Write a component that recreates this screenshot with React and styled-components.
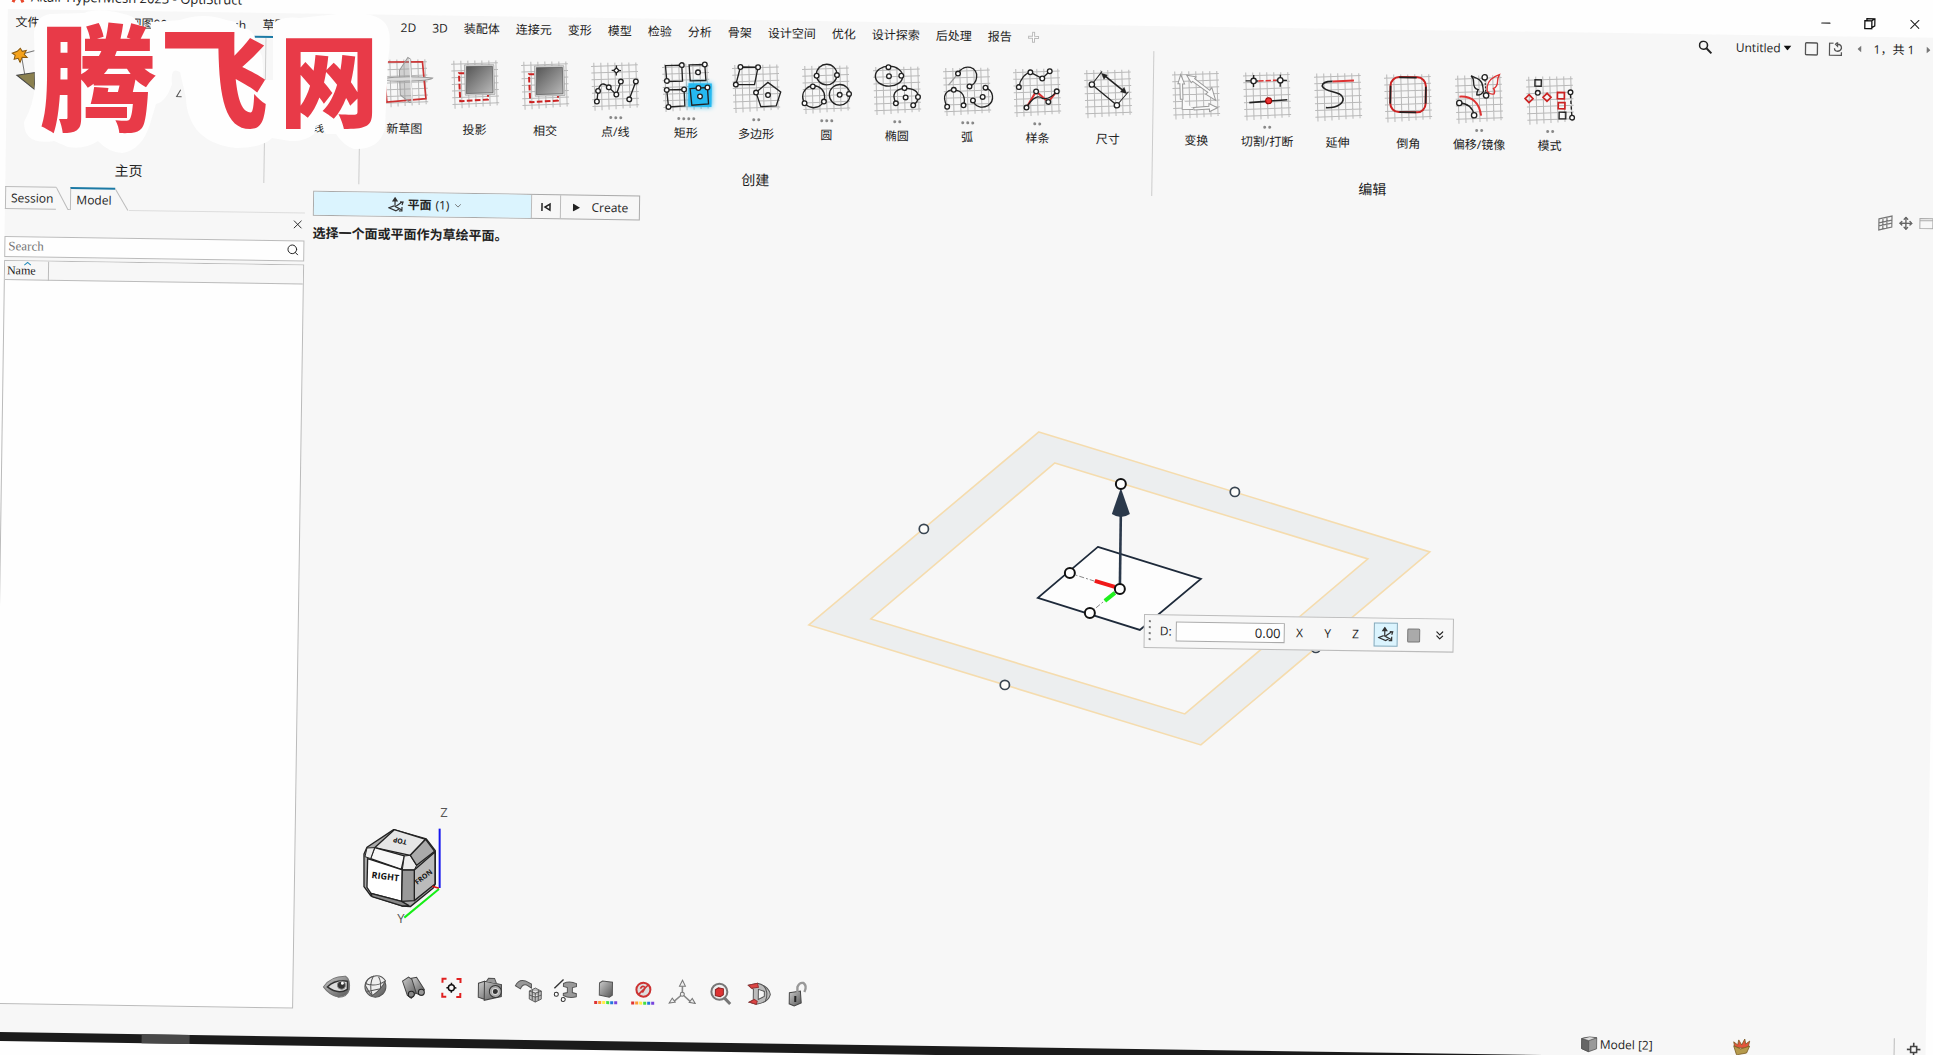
import React, { useState } from 'react'
import styled, { createGlobalStyle, css } from 'styled-components'
import { Search, X, Minus, Move, ChevronDown, ChevronsDown } from 'lucide-react'

const sans = `"Open Sans", "Noto Sans CJK SC", sans-serif`

/* ---------- ribbon drawings, all on a 150 unit sheet ---------- */

const Sheet = () => {
  const steps = [0, 1, 2, 3, 4, 5, 6]
  return (
    <g stroke='#b9b9b9' strokeWidth='3'>
      {steps.map((i) => (
        <path
          key={i}
          d={`M${8 + i * 21} ${3 - i / 2}L${14 + i * 21} ${147 - i * 2}M${i} ${14 + i * 20}L${140 + i} ${7 + i * 20}`}
        />
      ))}
    </g>
  )
}

const Dots = ({ at, r = 6 }) =>
  at.map(([x, y]) => (
    <circle key={`${x}-${y}`} cx={x} cy={y} r={r} fill='#fff' stroke='#222' strokeWidth='4' />
  ))

const Plate = () => (
  <>
    <path d='M40 40H24L29 124L112 118V104' stroke='#c22' strokeWidth='6' strokeDasharray='17 7' />
    <path d='M40 15L128 13L133 102L44 106Z' fill='#ddd' stroke='#999' strokeWidth='2' />
    <path d='M46 20L124 18L127 97L47 101Z' fill='url(#plate)' stroke='#555' strokeWidth='2' />
  </>
)

const drawings = {
  sketch: (
    <>
      <path d='M10 10L127 8L139 118L22 130Z' stroke='#c33' strokeWidth='5' />
      <path d='M58 35L83-5L90 0L98 128L90 130L62 108Z' fill='#9996' stroke='#999' strokeWidth='3' />
      <path d='M0 60Q80 48 158 56Q150 64 80 66Q20 70 0 60Z' fill='#ddd' stroke='#999' strokeWidth='3' />
      <path d='M88 0L98 130' stroke='#eee' strokeWidth='4' />
    </>
  ),
  plate: <Plate />,
  points: (
    <>
      <path d='M76 10V40M62 25H90' strokeWidth='4' />
      <path d='M19 119L22 87Q30 52 54 76L77 97L90 58M116 111L135 57' />
      <path d='M76 17L84 25L76 33L68 25Z' fill='#fff' />
      <Dots at={[[19, 119], [22, 87], [54, 76], [77, 97], [90, 58], [116, 111], [135, 57]]} r={7} />
    </>
  ),
  rect: (
    <>
      <rect x='80' y='60' width='70' height='70' fill='#25b9f0' stroke='none' filter='url(#glow)' />
      <rect x='80' y='60' width='70' height='70' fill='#25b9f0' stroke='none' />
      <path d='M10 8L59 6L62 54L15 56ZM81 5L128 3L132 51L85 53ZM15 81L67 79L70 128L21 132ZM85 76L137 72L141 121L91 126Z' />
      <Dots at={[[59, 6], [15, 54], [128, 3], [108, 27], [15, 81], [67, 79], [21, 132], [110, 74], [137, 72], [115, 99]]} r={7} />
    </>
  ),
  polygon: (
    <>
      <path d='M25 9H78L68 61L12 62Z' />
      <path d='M108 54L147 82L134 124L88 127L73 85Z' />
      <Dots at={[[25, 9], [78, 9], [12, 62], [73, 85], [109, 92]]} r={7} />
    </>
  ),
  circle: (
    <>
      <circle cx='74' cy='28' r='31' />
      <circle cx='36' cy='95' r='33' />
      <circle cx='114' cy='88' r='31' />
      <Dots at={[[44, 32], [105, 29], [33, 64], [9, 115], [67, 109], [142, 85], [114, 88]]} r={7} />
    </>
  ),
  ellipse: (
    <>
      <ellipse cx='48' cy='30' rx='41' ry='30' />
      <path d='M70 111Q50 72 95 65Q138 66 136 91Q137 106 122 116' />
      <Dots at={[[46, 3], [85, 28], [48, 30], [70, 111], [99, 93], [95, 65], [136, 91], [122, 116]]} r={7} />
    </>
  ),
  arc: (
    <>
      <path d='M17 54L45 19' stroke='#999' />
      <path d='M45 19C64-16 106 0 101 30Q99 50 80 57M14 119C-6 84 14 67 33 68C60 69 70 90 63 114M128 60C152 68 158 98 136 114C118 124 98 118 91 99' />
      <Dots at={[[45, 19], [80, 57], [14, 119], [33, 68], [63, 114], [128, 60], [91, 99], [120, 88]]} r={7} />
    </>
  ),
  spline: (
    <>
      <path d='M18 57C22 30 38 14 52 12L88 30L110 8' />
      <path d='M42 118L70 69L107 100L132 68' stroke='#d33' strokeWidth='6' />
      <path d='M42 118C60 86 76 80 90 90Q112 94 132 68' />
      <Dots at={[[18, 57], [52, 12], [88, 30], [110, 8], [42, 118], [70, 69], [107, 100], [132, 68]]} r={7} />
    </>
  ),
  measure: (
    <>
      <path d='M24 46L54 6M100 107L134 66' strokeWidth='3' />
      <path d='M24 46L100 107' />
      <path d='M58 16L122 66' strokeWidth='5' />
      <path d='M52 12L70 17L60 30ZM129 72L110 66L121 53Z' fill='#222' strokeWidth='1' />
      <Dots at={[[24, 46], [100, 107]]} r={8} />
    </>
  ),
  transform: (
    <g fill='#fafafa' stroke='#999' strokeWidth='3'>
      <path d='M26 12L38 40H32L34 86H26L24 40H18Z' />
      <path d='M44 14L72 18L68 24L114 58L120 50L132 88L102 70L108 64L62 32L58 36Z' />
      <path d='M66 110L112 106V98L138 110L114 122V114L68 118Z' />
      <path d='M32 86V116H66' />
    </g>
  ),
  split: (
    <>
      <path d='M8 28H24M40 28H46M100 25H132M32 10V46M112 8V44' />
      <path d='M46 28L100 25' stroke='#d33' strokeWidth='5' strokeDasharray='16 6' />
      <path d='M20 93L134 83' strokeWidth='5' />
      <circle cx='32' cy='28' r='8' fill='#fff' />
      <circle cx='112' cy='25' r='8' fill='#fff' />
      <circle cx='78' cy='87' r='9' fill='#e33' stroke='#900' strokeWidth='3' />
    </>
  ),
  extend: (
    <>
      <path d='M37 105C76 106 90 88 88 76C84 52 34 62 25 40C26 28 38 26 56 26' strokeWidth='5' />
      <path d='M56 26L120 22' stroke='#d33' strokeWidth='6' />
    </>
  ),
  fillet: (
    <>
      <rect x='20' y='10' width='106' height='105' rx='26' stroke='#c22' strokeWidth='6' />
      <path d='M46 11H98M48 115H98M20 36V90M126 38V88' strokeWidth='5' />
    </>
  ),
  mirror: (
    <>
      <path d='M48 3C60 8 82 12 84 36L86 50Q78 62 66 60Q66 50 70 44Q56 42 56 22Q56 10 48 3Z' />
      <path d='M133-2C116 4 100 14 97 34L97 48Q106 60 118 56Q122 48 116 40Q128 36 128 16Q128 8 133-2Z' stroke='#d33' />
      <path d='M90 14L93 56' strokeDasharray='6 4' strokeWidth='3' />
      <path d='M14 66Q70 62 80 122' stroke='#d33' strokeWidth='6' />
      <path d='M14 85Q52 86 59 121' />
      <Dots at={[[89, 7], [94, 61], [14, 85], [59, 121]]} r={8} />
    </>
  ),
  pattern: (
    <>
      <rect x='27' y='12' width='19' height='19' />
      <path d='M10 57L22 69L10 81L-2 69ZM64 52L76 64L64 76L52 64ZM95 49H116V68H95ZM98 79H118V98H98Z' stroke='#c22' strokeWidth='5' />
      <path d='M101 108H121V128H101Z' />
      <path d='M134 56L139 118' strokeDasharray='10 7' />
      <Dots at={[[36, 51], [134, 48], [140, 124]]} r={7} />
    </>
  ),
}

const ToolDrawing = ({ kind }) => (
  <svg width='50' height='50' viewBox='0 0 150 150' overflow='visible' fill='none' stroke='#222' strokeWidth='4'>
    <Sheet />
    {drawings[kind]}
  </svg>
)

const PlaneGlyph = () => (
  <svg width='16' height='16' viewBox='0 0 16 16' fill='none' stroke='#333' strokeWidth='1.2'>
    <path d='M7 2V10M5 4L7 1L9 4Z' fill='#333' />
    <path d='M6 9L1 11L8 14L11 12M7 10L14 5M12 5L15 5L14 8M8 10L14 13M14 10V14H11' />
  </svg>
)

/* ---------- view toolbar drawings, 30 unit box ---------- */

const viewIcons = [
  ['显示', (
    <>
      <path d='M2 16Q9 5 24 5Q29 8 28 18Q26 26 17 26Q8 24 2 16Z' fill='url(#steel)' stroke='#777' />
      <path d='M6 16Q14 8 26 10V18Q17 24 6 16Z' fill='#ddd' stroke='#333' strokeWidth='1.5' />
      <circle cx='20' cy='14' r='4' fill='#333' stroke='#888' />
      <circle cx='21' cy='12' r='1.5' fill='#fff' />
    </>
  )],
  ['球', (
    <>
      <circle cx='15' cy='15' r='10.5' fill='url(#steel)' stroke='#555' />
      <path d='M25 9A11 11 0 0 0 5 14Q8 20 12 24Q21 18 25 9Z' fill='#eee' stroke='#555' />
      <path d='M13 4Q8 13 12 24M5 12Q15 16 25 9M18 5Q21 10 20 17M7 20L20 17' stroke='#555' fill='none' />
    </>
  )],
  ['查找', (
    <>
      <path d='M4 9L10 5L15 8L18 20L13 26L9 23Z' fill='url(#steel)' stroke='#444' />
      <path d='M13 6L18 5L26 17L23 23L18 21Z' fill='url(#steel)' stroke='#444' />
      <circle cx='13' cy='22' r='3' fill='#888' stroke='#222' />
      <circle cx='23' cy='20' r='3' fill='#999' stroke='#222' />
    </>
  )],
  ['适合窗口', (
    <>
      <path d='M6 10V6H10M20 6H24V10M24 20V24H20M10 24H6V20' fill='none' stroke='#e02020' strokeWidth='2' />
      <circle cx='15' cy='15' r='3' fill='none' stroke='#111' strokeWidth='1.5' />
      <path d='M15 10V12M15 18V20M10 15H12M18 15H20' stroke='#111' strokeWidth='1.5' />
    </>
  )],
  ['截图', (
    <>
      <path d='M3 10L9 8V26L3 24ZM9 8L26 11V23L9 27Z' fill='url(#steel)' stroke='#444' />
      <path d='M11 8L13 5H19L21 10' fill='#999' stroke='#555' />
      <circle cx='20' cy='18' r='6' fill='#aaa' stroke='#333' />
      <circle cx='20' cy='18' r='3' fill='#333' stroke='#ddd' />
    </>
  )],
  ['旋转', (
    <>
      <path d='M2 12Q5 5 12 7L18 10L18 14L13 11Q9 10 7 15Z' fill='#999' stroke='#555' />
      <path d='M16 17L22 14L28 17V25L22 28L16 25ZM16 17L22 19L28 17M22 19V28M19 16V26M25 16V26M16 21L22 23L28 21' fill='#bbb' stroke='#444' strokeWidth='.8' />
    </>
  )],
  ['线轴', (
    <>
      <path d='M3 14L12 5' stroke='#333' strokeWidth='1.4' />
      <circle cx='5' cy='20' r='2' fill='#fff' stroke='#333' />
      <circle cx='12' cy='25' r='2' fill='#fff' stroke='#333' />
      <path d='M12 9Q18 6 25 9V12L21 13V18L25 19V22Q18 24 12 21V19L16 18V13L12 12Z' fill='#999' stroke='#555' />
    </>
  )],
  ['着色', (
    <>
      <path d='M9 8L12 6L22 7V20L19 22L9 20Z' fill='url(#steel)' stroke='#555' />
      <rect x='4' y='26' width='3' height='3' fill='#d33' /><rect x='8' y='26' width='3' height='3' fill='#f93' />
      <rect x='12' y='26' width='3' height='3' fill='#fe4' /><rect x='16' y='26' width='3' height='3' fill='#4d4' />
      <rect x='20' y='26' width='3' height='3' fill='#27d' /><rect x='24' y='26' width='3' height='3' fill='#74d' />
    </>
  )],
  ['取消着色', (
    <>
      <circle cx='15' cy='14' r='7' fill='#ddd' stroke='#c33' strokeWidth='2' />
      <path d='M10 19L20 9M12 13Q14 9 17 12L14 17' stroke='#c33' strokeWidth='1.6' fill='none' />
      <rect x='3' y='26' width='3' height='3' fill='#d33' /><rect x='7' y='26' width='3' height='3' fill='#f93' />
      <rect x='11' y='26' width='3' height='3' fill='#fe4' /><rect x='15' y='26' width='3' height='3' fill='#4d4' />
      <rect x='19' y='26' width='3' height='3' fill='#27d' /><rect x='23' y='26' width='3' height='3' fill='#74d' />
    </>
  )],
  ['坐标', (
    <>
      <path d='M15 10V18L6 26M15 18L24 26' fill='none' stroke='#888' strokeWidth='1.6' />
      <path d='M15 4L18 10H12ZM2 27L5 22L8 26ZM28 27L22 26L25 22Z' fill='#eee' stroke='#777' />
      <circle cx='15' cy='18' r='2' fill='#eee' stroke='#777' />
    </>
  )],
  ['放大', (
    <>
      <circle cx='14' cy='15' r='8' fill='#eee' stroke='#777' strokeWidth='2' />
      <path d='M10 13L13 11L18 12V18L15 20L10 19Z' fill='#d33' stroke='#822' />
      <path d='M19 21L25 27' stroke='#777' strokeWidth='3' />
    </>
  )],
  ['剖切', (
    <>
      <path d='M5 8L14 6Q26 9 27 17Q25 25 13 27L6 25L10 23V12Z' fill='#bbb' stroke='#555' />
      <path d='M5 8L14 6L15 10L8 11ZM6 25L11 22L14 24L13 27Z' fill='#d44' stroke='#933' />
      <path d='M15 12L21 14V19L15 22Z' fill='#f5f5f5' stroke='#555' />
      <path d='M20 8Q26 15 22 24' stroke='#555' fill='none' />
    </>
  )],
  ['解锁', (
    <>
      <path d='M7 15L18 13L19 25L12 28L7 26Z' fill='url(#steel)' stroke='#444' />
      <path d='M15 14V9Q17 4 21 5Q25 8 22 14' fill='none' stroke='#999' strokeWidth='2.4' />
      <path d='M12 18H14V24H12Z' fill='#222' />
    </>
  )],
]

const tabs = ['2D', '3D', '装配体', '连接元', '变形', '模型', '检验', '分析', '骨架', '设计空间', '优化', '设计探索', '后处理', '报告']

const createTools = [
  { name: '新草图', kind: 'sketch', more: 0 },
  { name: '投影', kind: 'plate', more: 0 },
  { name: '相交', kind: 'plate', more: 0 },
  { name: '点/线', kind: 'points', more: 3 },
  { name: '矩形', kind: 'rect', more: 4 },
  { name: '多边形', kind: 'polygon', more: 2 },
  { name: '圆', kind: 'circle', more: 3 },
  { name: '椭圆', kind: 'ellipse', more: 2 },
  { name: '弧', kind: 'arc', more: 3 },
  { name: '样条', kind: 'spline', more: 2 },
  { name: '尺寸', kind: 'measure', more: 0 },
]

const editTools = [
  { name: '变换', kind: 'transform', more: 0 },
  { name: '切割/打断', kind: 'split', more: 2 },
  { name: '延伸', kind: 'extend', more: 0 },
  { name: '倒角', kind: 'fillet', more: 0 },
  { name: '偏移/镜像', kind: 'mirror', more: 2 },
  { name: '模式', kind: 'pattern', more: 2 },
]

const Tool = ({ name, kind, more }) => (
  <ToolButton>
    <ToolDrawing kind={kind} />
    <More>
      {Array.from({ length: more }, (_, i) => (
        <i key={i} />
      ))}
    </More>
    {name}
  </ToolButton>
)

const TitleBar = () => (
  <Title>
    <svg width='14' height='14' viewBox='0 0 14 14' fill='none' stroke='#e8472b' strokeWidth='3'>
      <path d='M2 13L7 2L12 13' />
    </svg>
    <h1>Altair HyperMesh 2023 - OptiStruct</h1>
    <WindowButtons>
      <button aria-label='最小化'><Minus size={14} strokeWidth={2} /></button>
      <button aria-label='还原'>
        <svg width='12' height='12' viewBox='0 0 12 12' fill='none' stroke='#111' strokeWidth='1.3'>
          <path d='M1 3H8V11H1ZM3 3V1H11V8L8 10M8 3L11 1' />
        </svg>
      </button>
      <button aria-label='关闭'><X size={16} strokeWidth={1.6} /></button>
    </WindowButtons>
  </Title>
)

const MenuBar = () => (
  <Menu>
    <LeadTabs>
      <Tab>文件</Tab>
      <Tab>视图00</Tab>
      <Tab>Mesh</Tab>
      <Tab $active>草图</Tab>
    </LeadTabs>
    {tabs.map((name) => (
      <Tab key={name}>{name}</Tab>
    ))}
    <Tab aria-label='添加'>
      <svg width='12' height='12' viewBox='0 0 12 12' fill='#fff' stroke='#bbb'>
        <path d='M5 1H7V5H11V7H7V11H5V7H1V5H5Z' />
      </svg>
    </Tab>
    <Session>
      <button aria-label='搜索'>
        <svg width='14' height='14' viewBox='0 0 14 14' fill='none' stroke='#222' strokeWidth='1.6'>
          <circle cx='5' cy='5' r='4' /><path d='M8 8L13 13' strokeWidth='2' />
        </svg>
      </button>
      <button className='doc'>
        Untitled
        <svg width='8' height='5' viewBox='0 0 8 5'><path d='M0 0H8L4 5Z' fill='#111' /></svg>
      </button>
      <button aria-label='新页面'>
        <svg width='14' height='14' viewBox='0 0 14 14' fill='none' stroke='#555' strokeWidth='1.4'>
          <rect x='1' y='1' width='12' height='12' rx='1' />
        </svg>
      </button>
      <button aria-label='刷新页面'>
        <svg width='14' height='14' viewBox='0 0 14 14' fill='none' stroke='#555' strokeWidth='1.3'>
          <path d='M5 1H1V13H13V10M9 2Q13 2 13 6Q12 9 9 9Q6 9 6 6M9 0V4L7 2Z' />
        </svg>
      </button>
      <div className='pages'>
        <button aria-label='上一页'><svg width='4' height='7' viewBox='0 0 4 7'><path d='M4 0V7L0 3.5Z' fill='#777' /></svg></button>
        <span>1，共 1</span>
        <button aria-label='下一页'><svg width='4' height='7' viewBox='0 0 4 7'><path d='M0 0V7L4 3.5Z' fill='#777' /></svg></button>
      </div>
    </Session>
  </Menu>
)

const Ribbon = () => (
  <RibbonRow>
    <HomeGroup $width={259}>
      <HomeArt width='180' height='56' viewBox='0 0 180 56'>
        <path d='M12 13L26 9M12 13L16 34' stroke='#777' />
        <path d='M11 7L13 10L17 9L15 13L18 16L13 16L11 21L9 17L5 18L6 14L3 12L8 10Z' fill='#f5a21b' stroke='#8a5a10' />
        <path d='M8 34L26 31V48Z' fill='#8b8150' stroke='#444' />
        <path d='M172 46L168 53H173' fill='none' stroke='#555' />
      </HomeArt>
      <h2>主页</h2>
    </HomeGroup>
    <Group $width={95}>
      <Tools $width={95} $count={1}>
        <ToolButton><Blank />直线</ToolButton>
      </Tools>
    </Group>
    <Group $width={793}>
      <Tools $width={774} $count={11}>
        {createTools.map((tool) => (
          <Tool key={tool.name} {...tool} />
        ))}
      </Tools>
      <h2>创建</h2>
    </Group>
    <Group $width={440} $last>
      <Tools $width={424} $count={6}>
        {editTools.map((tool) => (
          <Tool key={tool.name} {...tool} />
        ))}
      </Tools>
      <h2>编辑</h2>
    </Group>
  </RibbonRow>
)

const Browser = () => (
  <Side>
    <SideTabs>
      <button>Session</button>
      <svg width='14' height='23' viewBox='0 0 14 23' fill='none' stroke='#bbb'><path d='M0 .5L12 22.5H14' /></svg>
      <button className='active'>Model</button>
      <svg width='14' height='23' viewBox='0 0 14 23' fill='none' stroke='#bbb'><path d='M0 1L13 22.5' /></svg>
      <span />
    </SideTabs>
    <CloseRow>
      <button aria-label='关闭面板'><X size={14} strokeWidth={1.6} /></button>
    </CloseRow>
    <SearchBox>
      <input aria-label='Search' placeholder='Search' />
      <Search size={13} strokeWidth={1.8} />
    </SearchBox>
    <Tree>
      <table>
        <thead>
          <tr>
            <th scope='col'>
              Name
              <svg width='7' height='4' viewBox='0 0 7 4' fill='none' stroke='#1b87b8'><path d='M0 4L3.5 1L7 4' /></svg>
            </th>
            <td />
          </tr>
        </thead>
      </table>
    </Tree>
  </Side>
)

const Scene = () => (
  <SceneSvg width='650' height='350' overflow='visible'>
    <g transform='rotate(-0.85)'>
      <path
        d='M239 12L630 132L401 325L9 205ZM255 43L568 139L385 294L71 199Z'
        fill='#eceeef' fillRule='evenodd' stroke='#f5dcae' strokeWidth='1.6'
      />
      <path d='M298 127L401 159L340 210L238 178Z' fill='#fdfdfd' stroke='#1e2a3a' strokeWidth='1.8' />
      <path d='M269 153L319 169L290 193' fill='none' stroke='#888' strokeDasharray='5 2 2 2' />
      <path d='M295 161L315 167' stroke='#f01818' strokeWidth='4' />
      <path d='M305 181L315 173' stroke='#1ef01e' strokeWidth='4' />
      <path d='M320 169L321 92' stroke='#2b394b' strokeWidth='2.6' />
      <path d='M321 68L330 94Q321 100 312 94Z' fill='#2b394b' />
      <g fill='#fdfdfb' stroke='#3a4652' strokeWidth='1.7'>
        <circle cx='124' cy='109' r='4.6' /><circle cx='435' cy='72' r='4.6' />
        <circle cx='205' cy='265' r='4.6' /><circle cx='516' cy='228' r='4.6' />
      </g>
      <g fill='#fff' stroke='#111' strokeWidth='2'>
        <circle cx='321' cy='64' r='5' /><circle cx='320' cy='169' r='5' />
        <circle cx='270' cy='153' r='5' /><circle cx='290' cy='193' r='5' />
      </g>
    </g>
  </SceneSvg>
)

const ViewCube = () => (
  <CubeSvg width='120' height='140' overflow='visible'>
    <g transform='rotate(-0.85) scale(.3333)' stroke='#222' strokeWidth='4' strokeLinejoin='round'>
      <path d='M190 119L288 147L315 182V282L308 295L240 350L215 348L122 318L101 290V192L110 172Z' fill='#aaa' />
      <path d='M192 119L286 148L240 196L133 173Z' fill='#e6e6e6' />
      <path d='M133 173L222 198L213 238L121 206Z' fill='#f8f8f8' />
      <path d='M112 206L216 240L214 334L122 310L110 292Z' fill='#fff' />
      <path d='M133 173L121 206L104 200L110 174ZM222 198L240 196L259 226L252 240L216 240Z' fill='#eee' strokeWidth='3' />
      <path d='M286 148L313 184L259 226L240 196Z' fill='#aaa' />
      <path d='M252 240L314 186V282L252 332Z' fill='#bbb' />
      <path d='M216 240H252V332L214 334Z' fill='#999' />
      <path d='M122 310L214 334L236 347L215 348L125 320Z' fill='#888' />
      <path d='M328 116V294' stroke='#1717ee' strokeWidth='6' />
      <path d='M306 289L326 295' stroke='#d11' strokeWidth='5' />
      <path d='M326 297L222 383' stroke='#16ee16' strokeWidth='6' />
    </g>
    <g transform='rotate(-0.85)' fontFamily={sans} fill='#555' fontSize='13'>
      <text x='110' y='27'>Z</text>
      <text x='67' y='133'>Y</text>
      <g fill='#111' fontWeight='700'>
        <text x='41' y='88' fontSize='9' transform='rotate(7 41 88)'>RIGHT</text>
        <text x='87' y='95' fontSize='7' transform='rotate(-38 87 95)'>FRON</text>
        <text x='77' y='50' fontSize='7' transform='rotate(192 77 50)'>TOP</text>
      </g>
    </g>
  </CubeSvg>
)

const MiniToolbar = () => {
  const [distance, setDistance] = useState('0.00')
  return (
    <Mini>
      <svg width='4' height='22' viewBox='0 0 4 22' stroke='#777' strokeWidth='2'><path d='M2 0V22' strokeDasharray='2 4' /></svg>
      <label htmlFor='distance'>D:</label>
      <input id='distance' value={distance} onChange={(e) => setDistance(e.target.value)} />
      <button>X</button>
      <button>Y</button>
      <button>Z</button>
      <button className='on' aria-label='平面'><PlaneGlyph /></button>
      <button aria-label='填充'>
        <svg width='14' height='15' viewBox='0 0 14 15'><rect x='1' y='1' width='12' height='13' rx='1' fill='#aaa' stroke='#777' /></svg>
      </button>
      <button className='last' aria-label='更多'><ChevronsDown size={14} strokeWidth={2} /></button>
    </Mini>
  )
}

const StatusBar = () => (
  <Status>
    <span className='model'>
      <svg width='17' height='16' viewBox='0 0 17 16' stroke='#555' strokeWidth='.8'>
        <path d='M1 2L9 0L16 1V12L8 15L1 12Z' fill='#999' /><path d='M1 2L8 4V15L1 12Z' fill='#666' /><path d='M1 2L9 0L16 1L8 4Z' fill='#ddd' />
      </svg>
      Model [2]
    </span>
    <svg width='18' height='16' viewBox='0 0 18 16' stroke='#7a5a20' strokeWidth='.8'>
      <path d='M2 8L1 3L5 6L6 1L9 6L12 0L13 5L17 2L15 10Z' fill='#e2553c' />
      <path d='M1 7L8 10L17 7L14 14L4 16Z' fill='#b59a4c' />
    </svg>
    <span className='snap'>
      <svg width='14' height='14' viewBox='0 0 14 14' fill='none' stroke='#444' strokeWidth='1.6'>
        <rect x='4' y='4' width='6' height='6' /><path d='M7 0V4M7 10V14M0 7H4M10 7H14' />
      </svg>
    </span>
  </Status>
)

const Watermark = () => (
  <Mark width='400' height='160'>
    <path
      d='M34 32Q36 16 50 14L84 13Q96 8 116 12L128 15Q138 18 140 29H151V22Q170 21 180 20Q204 12 226 20L236 22
        Q236 29 248 29Q256 34 255 42L262 56Q264 72 262 80H273V24Q280 16 300 18L346 13Q380 12 387 26
        Q392 36 388 60L385 128Q380 150 354 149Q344 146 336 134H326L322 124L316 126L314 134
        Q304 142 290 141L272 138Q262 148 236 148Q200 144 190 118Q186 108 186 98L180 72Q170 66 172 84
        Q166 102 156 104L150 124Q142 150 122 153Q108 152 98 141Q84 150 68 147L54 141Q24 146 24 122Q34 104 35 84Z'
      fill='#fefefe'
    />
    <text fill='#e83a48' fontFamily='"Noto Sans CJK SC", sans-serif' fontWeight='900' fontSize='116'>
      <tspan x='40' y='122'>腾</tspan>
      <tspan x='160' y='120' fontSize='108'>飞</tspan>
      <tspan x='279' y='119' fontSize='100'>网</tspan>
    </text>
  </Mark>
)

const App = () => {
  return (
    <Desktop>
      <GlobalStyle />
      <Defs width='0' height='0'>
        <defs>
          <linearGradient id='plate' x1='0' y1='0' x2='1' y2='1'>
            <stop offset='0' stopColor='#555' /><stop offset='1' stopColor='#bbb' />
          </linearGradient>
          <linearGradient id='steel' x1='0' y1='0' x2='1' y2='1'>
            <stop offset='0' stopColor='#ccc' /><stop offset='1' stopColor='#555' />
          </linearGradient>
          <filter id='glow' x='-30%' y='-30%' width='160%' height='160%'><feGaussianBlur stdDeviation='8' /></filter>
        </defs>
      </Defs>
      <Window>
        <TitleBar />
        <Body>
          <MenuBar />
          <Ribbon />
          <Main>
            <Browser />
            <Viewport>
              <ContextRow>
                <ContextBar>
                  <button className='plane'>
                    <PlaneGlyph /> <b>平面</b> (1) <ChevronDown size={10} color='#666' />
                  </button>
                  <button aria-label='重置'>
                    <svg width='10' height='10' viewBox='0 0 10 10' fill='none' stroke='#222' strokeWidth='1.5'><path d='M1 1V9M9 2V8L4 5Z' /></svg>
                  </button>
                  <button className='create'>
                    <svg width='8' height='8' viewBox='0 0 8 8'><path d='M1 0L8 4L1 8Z' fill='#222' /></svg>
                    Create
                  </button>
                </ContextBar>
                <CornerIcons>
                  <svg width='15' height='16' viewBox='0 0 15 16' fill='none' stroke='#777' strokeWidth='1.2'>
                    <path d='M1 4L14 1V12L1 15ZM5 3V14M9 2V13M1 8L14 5M1 11L14 8' />
                  </svg>
                  <Move size={14} color='#666' strokeWidth={2.4} />
                  <svg width='15' height='12' viewBox='0 0 15 12' fill='none' stroke='#aaa'><path d='M1 1H14V11H1ZM1 3H14' /></svg>
                </CornerIcons>
              </ContextRow>
              <Hint>选择一个面或平面作为草绘平面。</Hint>
              <Scene />
              <ViewCube />
              <MiniToolbar />
              <ViewBar>
                {viewIcons.map(([name, art]) => (
                  <button key={name} aria-label={name}>
                    <svg width='30' height='30' viewBox='0 0 30 30'>{art}</svg>
                  </button>
                ))}
              </ViewBar>
            </Viewport>
          </Main>
          <StatusBar />
        </Body>
        <Taskbar><span /></Taskbar>
      </Window>
      <Watermark />
    </Desktop>
  )
}

const GlobalStyle = createGlobalStyle`
  * {
    box-sizing: border-box;
  }
  body {
    margin: 0;
    background: #fefefe;
    color: #222;
    font-family: ${sans};
    font-size: 12px;
    line-height: 16px;
  }
  button {
    display: flex;
    align-items: center;
    justify-content: center;
    padding: 0;
    border: 0;
    background: none;
    color: inherit;
    font: inherit;
    white-space: nowrap;
  }
  h1, h2, p {
    margin: 0;
    font-weight: 400;
  }
  svg {
    flex: none;
  }
`

const Desktop = styled.div`
  position: relative;
  height: 100vh;
  overflow: hidden;
`

const Defs = styled.svg`
  position: absolute;
`

/* the whole desktop leans slightly clockwise */
const Window = styled.div`
  display: flex;
  flex-direction: column;
  width: calc(100% + 8px);
  min-height: calc(100vh + 3px);
  margin-top: -17px;
  transform: rotate(0.85deg);
  transform-origin: 0 17px;
`

const Title = styled.header`
  display: flex;
  align-items: center;
  gap: 6px;
  height: 26px;
  padding: 0 18px 0 11px;
  h1 {
    font-size: 13px;
    line-height: 16px;
  }
`

const WindowButtons = styled.div`
  display: flex;
  gap: 31px;
  margin-left: auto;
`

const Body = styled.div`
  display: flex;
  flex: 1;
  flex-direction: column;
  margin-left: 8px;
  background: #f7f7f7;
`

const Menu = styled.nav`
  display: flex;
  align-items: center;
  height: 25px;
`

const LeadTabs = styled.div`
  display: grid;
  grid-template-columns: 114px 86px 47px 138px;
  justify-items: start;
`

const Tab = styled.button`
  height: 25px;
  padding: 0 8px;
  ${({ $active }) => $active && css`
    border-bottom: 2px solid #1c7aa5;
  `}
`

const Session = styled.div`
  display: flex;
  align-items: center;
  gap: 10px;
  margin-left: auto;
  padding-right: 10px;
  .doc {
    gap: 3px;
    margin: 0 3px 0 13px;
  }
  .pages {
    display: flex;
    gap: 12px;
    margin-left: 5px;
  }
`

const RibbonRow = styled.section`
  display: flex;
  height: 152px;
`

const Group = styled.div`
  display: flex;
  flex: none;
  flex-direction: column;
  align-items: center;
  width: ${({ $width }) => $width}px;
  height: 145px;
  border-right: ${({ $last }) => ($last ? 0 : '1px solid #ccc')};
  h2 {
    margin-top: auto;
    font-size: 14px;
    line-height: 20px;
  }
`

const HomeGroup = styled(Group)`
  padding-right: 12px;
`

const HomeArt = styled.svg`
  align-self: flex-start;
  margin: 7px 0 0 2px;
`

const Tools = styled.div`
  display: grid;
  grid-template-columns: repeat(${({ $count }) => $count}, 1fr);
  width: ${({ $width }) => $width}px;
  padding-top: 19px;
`

const ToolButton = styled.button`
  display: flex;
  flex-direction: column;
  align-items: center;
  justify-content: flex-start;
`

const Blank = styled.i`
  height: 62px;
`

const More = styled.span`
  display: flex;
  gap: 2px;
  height: 12px;
  padding-top: 4px;
  i {
    width: 3px;
    height: 3px;
    border-radius: 50%;
    background: #888;
  }
`

const Main = styled.main`
  display: flex;
  flex: 1;
  gap: 8px;
`

const Side = styled.aside`
  display: flex;
  flex: none;
  flex-direction: column;
  width: 300px;
  padding-bottom: 6px;
`

const SideTabs = styled.div`
  display: flex;
  height: 23px;
  button {
    padding: 0 3px 0 5px;
    border: solid #bbb;
    border-width: 1px 0 1px 1px;
  }
  .active {
    border-top: 2px solid #1c7aa5;
    border-bottom: 0;
  }
  span {
    flex: 1;
    border-bottom: 1px solid #ddd;
  }
`

const CloseRow = styled.div`
  display: flex;
  justify-content: flex-end;
  align-items: center;
  height: 27px;
  padding: 0 0 6px;
`

const SearchBox = styled.div`
  display: flex;
  align-items: center;
  height: 21px;
  padding: 0 4px 2px 3px;
  border: 1px solid #bbb;
  background: #fefefe;
  input {
    flex: 1;
    min-width: 0;
    padding: 0;
    border: 0;
    outline: 0;
    background: none;
    font: 13px/16px "Liberation Serif", serif;
  }
`

const Tree = styled.div`
  flex: 1;
  margin-top: 3px;
  border: 1px solid #bbb;
  background: #fefefe;
  table {
    width: 100%;
    border-collapse: collapse;
    background: #f7f7f7;
  }
  tr {
    height: 18px;
  }
  th, td {
    position: relative;
    padding: 0 2px;
    border-bottom: 1px solid #bbb;
  }
  th {
    width: 43px;
    border-right: 1px solid #bbb;
    text-align: left;
    font: 12px/16px "Liberation Serif", serif;
  }
  th svg {
    position: absolute;
    top: 0;
    left: 19px;
  }
`

const Viewport = styled.section`
  position: relative;
  display: flex;
  flex: 1;
  flex-direction: column;
`

const ContextRow = styled.div`
  display: flex;
  justify-content: space-between;
`

const ContextBar = styled.div`
  display: grid;
  grid-template-columns: 217px 29px 79px;
  height: 25px;
  border: 1px solid #aaa;
  button + button {
    border-left: 1px solid #bbb;
  }
  .plane {
    gap: 4px;
    padding-left: 6px;
    background: #dbf4fe;
  }
  .create {
    gap: 12px;
  }
`

const CornerIcons = styled.div`
  display: flex;
  align-items: center;
  gap: 6px;
  height: 18px;
  padding-right: 4px;
`

const Hint = styled.p`
  margin-top: 7px;
  font-size: 13px;
  font-weight: 700;
  line-height: 20px;
`

const SceneSvg = styled.svg`
  position: absolute;
  top: 222px;
  left: 490px;
`

const CubeSvg = styled.svg`
  position: absolute;
  top: 599px;
  left: 26px;
`

const Mini = styled.div`
  position: absolute;
  top: 411px;
  left: 837px;
  display: flex;
  align-items: center;
  width: 310px;
  height: 34px;
  padding: 0 3px;
  border: 1px solid #bbb;
  background: #f7f7f7;
  label {
    margin: 0 4px 0 8px;
  }
  input {
    width: 109px;
    height: 20px;
    margin-right: 1px;
    padding: 0 3px;
    border: 1px solid #aaa;
    background: #fefefe;
    color: #222;
    font: 13px/16px ${sans};
    text-align: right;
  }
  button {
    flex: none;
    width: 28px;
    height: 24px;
  }
  .on {
    width: 24px;
    margin: 0 2px 0 4px;
    border: 1px solid #8ab;
    background: #dbf4fe;
  }
  .last {
    width: 24px;
  }
`

const ViewBar = styled.div`
  display: grid;
  grid-template-columns: repeat(13, 1fr);
  width: 499px;
  margin: auto 0 14px 16px;
`

const Status = styled.footer`
  display: flex;
  align-items: center;
  height: 22px;
  padding-right: 5px;
  .model {
    display: flex;
    gap: 2px;
    margin: 0 80px 0 auto;
  }
  .snap {
    margin-left: 143px;
    padding: 4px 0 4px 12px;
    border-left: 1px solid #bbb;
    line-height: 0;
  }
`

const Taskbar = styled.div`
  height: 9px;
  padding-left: 157px;
  background: #1b1b1b;
  span {
    display: block;
    width: 48px;
    height: 9px;
    background: #484848;
  }
`

const Mark = styled.svg`
  position: absolute;
  top: 0;
  left: 0;
  pointer-events: none;
`

export default App
